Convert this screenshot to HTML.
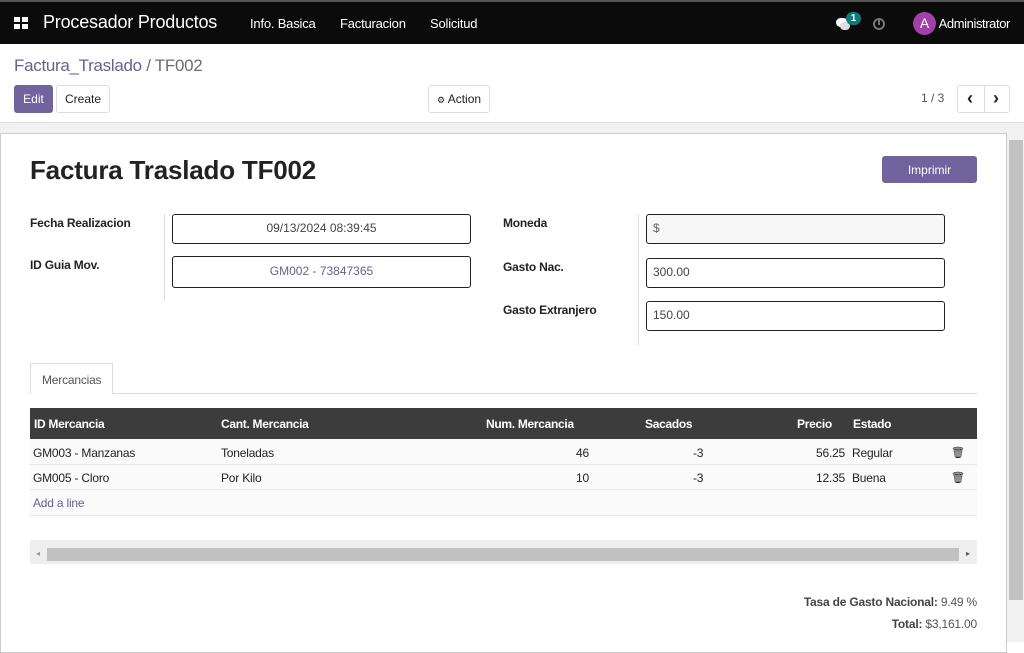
<!DOCTYPE html>
<html><head><meta charset="utf-8"><style>
*{box-sizing:border-box;margin:0;padding:0}
body{width:1024px;height:642px;overflow:hidden;font-family:"Liberation Sans",Arial,sans-serif;font-size:12px;color:#222;background:#fff;position:relative}
.a{position:absolute}
.nav{left:0;top:0;width:1024px;height:44px;background:#0b0b0b;border-top:2px solid #555}
.nav .t{color:#fff;font-size:13px;top:14px;letter-spacing:-0.2px}
.btn{border:1px solid #ddd;border-radius:3px;background:#fff;font-size:12px;text-align:center;line-height:26px;color:#222}
.lbl{font-weight:bold;font-size:12px;color:#222;letter-spacing:-0.2px}
.inp{border:1.5px solid #222;border-radius:3px;height:30px;line-height:27px;font-size:12px;color:#444}
.th{color:#fff;font-weight:bold;font-size:12px;top:417px;letter-spacing:-0.3px}
.td{font-size:12px;color:#222;letter-spacing:-0.2px}
</style></head><body>
<div class="a nav">
 <div class="a" style="left:14px;top:15px;width:14px;height:12px">
  <div class="a" style="left:0;top:0;width:6px;height:5px;background:#fff"></div><div class="a" style="left:8px;top:0;width:6px;height:5px;background:#fff"></div>
  <div class="a" style="left:0;top:7px;width:6px;height:5px;background:#fff"></div><div class="a" style="left:8px;top:7px;width:6px;height:5px;background:#fff"></div>
 </div>
 <div class="a" style="left:43px;top:10px;color:#fff;font-size:18px;letter-spacing:-0.2px">Procesador Productos</div>
 <div class="a t" style="left:250px">Info. Basica</div>
 <div class="a t" style="left:340px">Facturacion</div>
 <div class="a t" style="left:430px">Solicitud</div>
 <div class="a" style="left:836px;top:16px;width:12px;height:9px;background:#fff;border-radius:5px"></div>
 <div class="a" style="left:840px;top:20px;width:10px;height:8px;background:#ddd;border-radius:4px"></div>
 <div class="a" style="left:846px;top:10px;width:15px;height:13px;background:#0f7a7a;border-radius:7px;color:#fff;font-size:10px;font-weight:bold;text-align:center;line-height:13px">1</div>
 <div class="a" style="left:873px;top:16px;width:12px;height:12px;border:2px solid #777;border-radius:50%"></div>
 <div class="a" style="left:878px;top:18px;width:2px;height:5px;background:#777"></div>
 <div class="a" style="left:913px;top:10px;width:23px;height:23px;background:#a040a8;border-radius:50%;color:#fff;font-size:14px;text-align:center;line-height:23px">A</div>
 <div class="a" style="right:14px;top:14px;color:#fff;font-size:13px;letter-spacing:-0.4px">Administrator</div>
</div>
<div class="a" style="left:14px;top:56px;font-size:17px;color:#6b5f8f;letter-spacing:-0.3px">Factura_Traslado <span style="color:#6e6e6e">/ TF002</span></div>
<div class="a btn" style="left:14px;top:85px;width:39px;height:28px;background:#71639e;border-color:#71639e;color:#fff">Edit</div>
<div class="a btn" style="left:56px;top:85px;width:54px;height:28px">Create</div>
<div class="a btn" style="left:428px;top:85px;width:62px;height:28px"><span style="font-size:9px">⚙</span> Action</div>
<div class="a" style="left:921px;top:91px;color:#555;font-size:12px">1 / 3</div>
<div class="a btn" style="left:957px;top:85px;width:53px;height:28px;font-weight:bold;font-size:18px"><span style="position:absolute;left:9px;top:-1px">‹</span><span style="position:absolute;left:26px;top:0;height:26px;border-left:1px solid #ddd"></span><span style="position:absolute;left:35px;top:-1px">›</span></div>
<div class="a" style="left:0;top:122px;width:1024px;height:520px;background:#f1f1f3;border-top:1px solid #ddd"></div>
<div class="a" style="left:0;top:133px;width:1007px;height:520px;background:#fff;border:1px solid #ccc"></div>
<div class="a" style="left:1008px;top:128px;width:16px;height:514px;background:#f1f1f1"></div>
<div class="a" style="left:1009px;top:140px;width:14px;height:460px;background:#c1c1c1"></div>
<div class="a" style="left:30px;top:155px;font-size:26px;font-weight:bold;color:#222;letter-spacing:-0.2px">Factura Traslado TF002</div>
<div class="a btn" style="left:882px;top:156px;width:95px;height:27px;background:#71639e;border-color:#71639e;color:#fff">Imprimir</div>
<div class="a lbl" style="left:30px;top:216px">Fecha Realizacion</div>
<div class="a lbl" style="left:30px;top:258px">ID Guia Mov.</div>
<div class="a" style="left:164px;top:214px;width:1px;height:87px;background:#ddd"></div>
<div class="a inp" style="left:172px;top:214px;width:299px;text-align:center">09/13/2024 08:39:45</div>
<div class="a inp" style="left:172px;top:256px;width:299px;height:32px;line-height:29px;text-align:center;color:#6b5f8f">GM002 - 73847365</div>
<div class="a lbl" style="left:503px;top:216px">Moneda</div>
<div class="a lbl" style="left:503px;top:260px">Gasto Nac.</div>
<div class="a lbl" style="left:503px;top:303px">Gasto Extranjero</div>
<div class="a" style="left:638px;top:214px;width:1px;height:131px;background:#ddd"></div>
<div class="a inp" style="left:646px;top:214px;width:299px;background:#f7f7f7;padding-left:6px;color:#666">$</div>
<div class="a inp" style="left:646px;top:258px;width:299px;padding-left:6px">300.00</div>
<div class="a inp" style="left:646px;top:301px;width:299px;padding-left:6px">150.00</div>
<div class="a" style="left:30px;top:393px;width:947px;height:1px;background:#ddd"></div>
<div class="a" style="left:30px;top:363px;width:83px;height:31px;background:#fff;border:1px solid #ddd;border-bottom:none;color:#555;padding:9px 0 0 11px;letter-spacing:-0.2px">Mercancias</div>
<div class="a" style="left:30px;top:408px;width:947px;height:31px;background:#3c3c3c"></div>
<div class="a th" style="left:34px">ID Mercancia</div>
<div class="a th" style="left:221px">Cant. Mercancia</div>
<div class="a th" style="left:486px">Num. Mercancia</div>
<div class="a th" style="left:645px">Sacados</div>
<div class="a th" style="left:797px">Precio</div>
<div class="a th" style="left:853px">Estado</div>
<div class="a" style="left:30px;top:439px;width:947px;height:76px;background:#fafafa"></div>
<div class="a" style="left:30px;top:464px;width:947px;height:1px;background:#e3e6ea"></div>
<div class="a" style="left:30px;top:489px;width:947px;height:1px;background:#e3e6ea"></div>
<div class="a" style="left:30px;top:515px;width:947px;height:1px;background:#e3e6ea"></div>
<div class="a td" style="left:33px;top:446px">GM003 - Manzanas</div>
<div class="a td" style="left:221px;top:446px">Toneladas</div>
<div class="a td" style="left:576px;top:446px">46</div>
<div class="a td" style="left:693px;top:446px">-3</div>
<div class="a td" style="left:816px;top:446px">56.25</div>
<div class="a td" style="left:852px;top:446px">Regular</div>
<div class="a td" style="left:951px;top:446px;font-size:11px">🗑</div>
<div class="a td" style="left:33px;top:471px">GM005 - Cloro</div>
<div class="a td" style="left:221px;top:471px">Por Kilo</div>
<div class="a td" style="left:576px;top:471px">10</div>
<div class="a td" style="left:693px;top:471px">-3</div>
<div class="a td" style="left:816px;top:471px">12.35</div>
<div class="a td" style="left:852px;top:471px">Buena</div>
<div class="a td" style="left:951px;top:471px;font-size:11px">🗑</div>
<div class="a td" style="left:33px;top:496px;color:#6b5f8f">Add a line</div>
<div class="a" style="left:30px;top:540px;width:947px;height:24px;background:#eee"></div>
<div class="a" style="left:47px;top:548px;width:912px;height:13px;background:#c1c1c1"></div>
<div class="a" style="left:36px;top:549px;font-size:8px;color:#999">◂</div>
<div class="a" style="left:966px;top:549px;font-size:8px;color:#555">▸</div>
<div class="a td" style="right:47px;top:595px;color:#555;text-align:right"><b style="color:#444">Tasa de Gasto Nacional:</b> 9.49 %</div>
<div class="a td" style="right:47px;top:617px;color:#555;text-align:right"><b style="color:#444">Total:</b> $3,161.00</div>
</body></html>
